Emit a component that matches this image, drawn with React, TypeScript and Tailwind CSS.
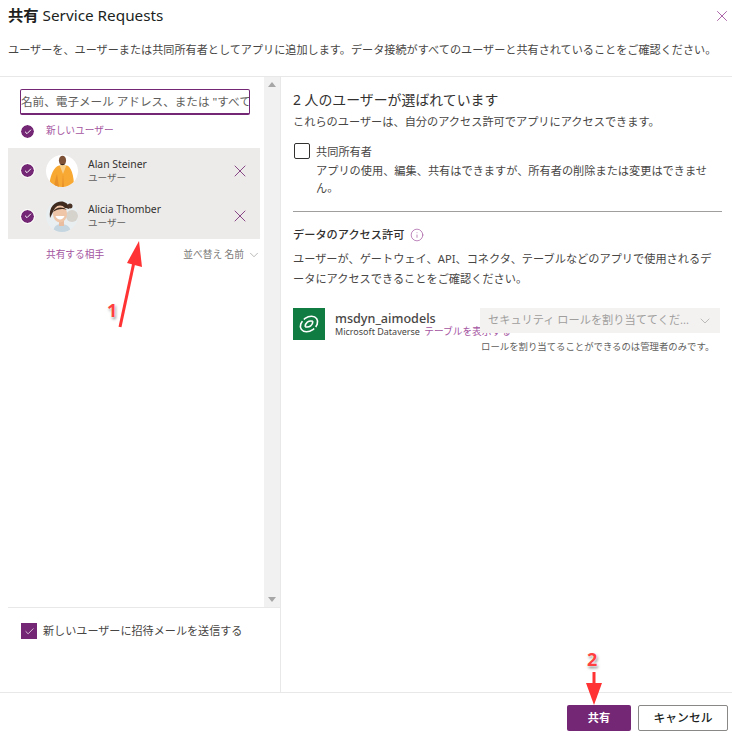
import { X, ChevronDown, Check, Info } from "lucide-react";

const font = { fontFamily: '"Noto Sans", "Noto Sans CJK JP", sans-serif' };

function Tick() {
  return (
    <span className="flex h-[13px] w-[13px] shrink-0 items-center justify-center rounded-full bg-[#742774] outline outline-1 outline-white">
      <Check className="h-[8px] w-[8px] text-white" strokeWidth={3} />
    </span>
  );
}

function AlanAvatar() {
  return (
    <svg viewBox="0 0 32 32" className="h-8 w-8 shrink-0 rounded-full bg-white">
      <path d="M3 32 C4 20 8 12 13 10.5 L21 10.5 C25 12 28 20 28 32 Z" fill="#f7a933" />
      <path d="M8 32 C9 26 10 22 11 19 L13 32 Z" fill="#e8912a" />
      <path d="M13.5 10 L17 19 L20.5 10 Z" fill="#f9d08a" />
      <path d="M16 32 L17 18 L18 32 Z" fill="#e8912a" />
      <ellipse cx="16.5" cy="5.5" rx="3.6" ry="4.8" fill="#7d5236" />
      <path d="M13 7 C14 11 19 11 20 7 L19 9 L14 9 Z" fill="#33231a" />
    </svg>
  );
}

function AliciaAvatar() {
  return (
    <svg viewBox="0 0 32 32" className="h-8 w-8 shrink-0 rounded-full bg-[#e9eef0]">
      <circle cx="26" cy="16" r="6" fill="#d6d2cc" />
      <path d="M7 32 C8 26 11 24 15 24 C20 24 24 26 25 32 Z" fill="#c5d6e0" />
      <path d="M13 20 L18 20 L18 26 L13 26 Z" fill="#e9bd9f" />
      <path d="M4 18 C2 5 12 0 18 2 C21 3 23 5 23 9 L20 8 L8 10 Z" fill="#3f2a20" />
      <circle cx="24" cy="6" r="2.5" fill="#4a3226" />
      <ellipse cx="14" cy="14" rx="7" ry="8.5" fill="#f0c6a8" />
      <path d="M7 12 C9 7 17 6 21 10 C17 8 11 9 7 12 Z" fill="#3f2a20" />
      <path d="M9.5 16 C11 20.5 17 20.5 18.5 16 Z" fill="#fff" />
    </svg>
  );
}

function UserRow({ name, avatar }: { name: string; avatar: React.ReactNode }) {
  return (
    <div className="flex h-[45.5px] items-center pl-[13px] pr-[10px]">
      <Tick />
      <div className="ml-3">{avatar}</div>
      <div className="ml-[10px] flex-1">
        <div className="text-[10.4px] leading-[13px] text-[#323130]">{name}</div>
        <div className="text-[9.6px] leading-[13px] text-[#605e5c]">ユーザー</div>
      </div>
      <X className="h-5 w-5 text-[#742774]" strokeWidth={1} />
    </div>
  );
}

export default function App() {
  return (
    <div style={font} className="relative flex h-[741px] w-[732px] flex-col overflow-hidden bg-white text-[#323130]">
      <header className="relative h-[77px] shrink-0 border-b border-[#e8e8e8] px-2 pt-[4px]">
        <h1 className="text-[15.3px] leading-[22px] text-[#201f1e]">
          <span className="font-bold">共有</span> Service Requests
        </h1>
        <p className="mt-[14px] whitespace-nowrap text-[11.14px] leading-[20px] text-[#484644]">
          ユーザーを、ユーザーまたは共同所有者としてアプリに追加します。データ接続がすべてのユーザーと共有されていることをご確認ください。
        </p>
        <X className="absolute right-[1px] top-[7px] h-[18px] w-[18px] text-[#a4549f]" strokeWidth={1.2} />
      </header>

      <div className="flex min-h-0 flex-1">
        <aside className="flex w-[281px] shrink-0 flex-col border-r border-[#e8e8e8]">
          <div className="flex h-[530px] shrink-0">
            <div className="w-[264px] shrink-0 pt-3">
              <div className="ml-5 flex h-[26px] w-[230px] items-center overflow-hidden rounded-[2px] border border-[#742774] border-b-2 bg-white">
                <span className="whitespace-nowrap text-[11.6px] text-[#605e5c]">名前、電子メール アドレス、または "すべてのユーザー"</span>
              </div>
              <div className="mt-[10px] flex h-[13px] items-center pl-[21px]">
                <Tick />
                <span className="ml-3 text-[9.7px] text-[#a4549f]">新しいユーザー</span>
              </div>
              <div className="ml-2 mr-1 mt-[10px] h-[91px] bg-[#edebe9]">
                <UserRow name="Alan Steiner" avatar={<AlanAvatar />} />
                <UserRow name="Alicia Thomber" avatar={<AliciaAvatar />} />
              </div>
              <div className="mt-[9px] flex items-center pl-[46px] pr-[3px] text-[9.7px] leading-[14px]">
                <span className="text-[#a4549f]">共有する相手</span>
                <span className="ml-auto text-[#7a7876]">並べ替え 名前</span>
                <ChevronDown className="ml-[3px] h-[14px] w-[14px] text-[#8a8886]" strokeWidth={1} />
              </div>
            </div>
            <div className="flex w-4 flex-col items-center justify-between bg-[#f1f1f1] py-[5px]">
              <span className="h-0 w-0 border-x-[4px] border-b-[5px] border-x-transparent border-b-[#a6a6a6]" />
              <span className="h-0 w-0 border-x-[4px] border-t-[5px] border-x-transparent border-t-[#a6a6a6]" />
            </div>
          </div>
          <div className="ml-2 flex flex-1 items-start border-t border-[#e8e8e8] pl-[13px] pt-[15px]">
            <span className="flex h-4 w-4 items-center justify-center bg-[#742774]">
              <Check className="h-[11px] w-[11px] text-white" strokeWidth={1.5} />
            </span>
            <span className="ml-[6px] text-[11.1px] leading-4 text-[#484644]">新しいユーザーに招待メールを送信する</span>
          </div>
        </aside>

        <main className="min-w-0 flex-1 pl-3 pr-[10px] pt-[13px]">
          <h2 className="text-[13.9px] leading-5 text-[#323130]">2 人のユーザーが選ばれています</h2>
          <p className="mt-[2px] text-[11.2px] leading-[20px] text-[#484644]">これらのユーザーは、自分のアクセス許可でアプリにアクセスできます。</p>
          <div className="mt-[11px] flex pl-[1px]">
            <span className="h-4 w-4 shrink-0 rounded-[2px] border border-[#323130] bg-white" />
            <div className="ml-[6px] text-[11.2px] text-[#484644]">
              <div className="leading-[18px]">共同所有者</div>
              <div className="mt-[1px] leading-[17px]">
                アプリの使用、編集、共有はできますが、所有者の削除または変更はできませ
                <br />
                ん。
              </div>
            </div>
          </div>
          <div className="mt-[15px] border-t border-[#a19f9d]" />
          <div className="mt-[15px] flex items-center">
            <span className="text-[11.2px] font-medium leading-[16px] text-[#323130]">データのアクセス許可</span>
            <Info className="ml-[6px] h-[14px] w-[14px] text-[#a4549f]" strokeWidth={1.2} />
          </div>
          <p className="mt-[6px] text-[11.2px] leading-[20px] text-[#484644]">
            ユーザーが、ゲートウェイ、API、コネクタ、テーブルなどのアプリで使用されるデ
            <br />
            ータにアクセスできることをご確認ください。
          </p>

          <div className="mt-[19px] flex">
            <div className="flex h-8 w-8 shrink-0 items-center justify-center bg-[#107c41]">
              <svg viewBox="0 0 20 20" className="h-[22px] w-[22px]" fill="none" stroke="#fff" strokeWidth="1.5">
                <ellipse cx="10" cy="10" rx="8.5" ry="6.2" transform="rotate(-35 10 10)" />
                <path d="M6.5 12.5 C6.5 9 9.5 6.5 13.5 7.5" />
                <path d="M13.5 7.5 C13.5 11 10.5 13.5 6.5 12.5" />
                <path d="M3 5 L6 8 M17 15 L14 12" stroke="#107c41" strokeWidth="2" />
              </svg>
            </div>
            <div className="ml-[10px] w-[145px] shrink-0 whitespace-nowrap pt-[3px]">
              <div className="text-[12.6px] font-medium leading-[15px] text-[#484644]">msdyn_aimodels</div>
              <div className="text-[9px] leading-[11px] text-[#484644]">
                Microsoft Dataverse <span className="ml-[2px] text-[9.7px] text-[#a4549f]">テーブルを表示する</span>
              </div>
            </div>
            <div className="relative w-[240px] shrink-0">
              <div className="flex h-[25px] items-center justify-between bg-[#f3f2f1] pl-2 pr-[7px]">
                <span className="whitespace-nowrap text-[11.2px] text-[#a19f9d]">セキュリティ ロールを割り当ててくだ...</span>
                <ChevronDown className="h-[16px] w-[16px] text-[#a19f9d]" strokeWidth={1} />
              </div>
              <p className="mt-[6px] whitespace-nowrap pl-[1px] text-[9.4px] leading-[16px] text-[#605e5c]">ロールを割り当てることができるのは管理者のみです。</p>
            </div>
          </div>
        </main>
      </div>

      <footer className="flex h-[49px] shrink-0 items-start justify-end gap-[7px] border-t border-[#e8e8e8] pr-1 pt-3">
        <button className="h-[26px] w-16 rounded-[2px] bg-[#742774] text-[11.2px] font-bold text-white">共有</button>
        <button className="h-[26px] w-[90px] rounded-[2px] border border-[#8a8886] bg-white text-[11.8px] font-medium text-[#201f1e]">キャンセル</button>
      </footer>

      {/* annotations drawn on top of the screenshot */}
      <svg viewBox="0 0 732 741" className="pointer-events-none absolute inset-0 h-[741px] w-[732px]">
        <path d="M120 327 L134 262" stroke="#ff3333" strokeWidth="3" fill="none" />
        <path d="M139 241 L127 263 L142 267 Z" fill="#ff3333" />
        <path d="M594 672 L594 690" stroke="#ff3333" strokeWidth="3" fill="none" />
        <path d="M594 705 L586 683 L602 683 Z" fill="#ff3333" />
      </svg>
      <span className="absolute left-[107px] top-[298px] text-[18px] font-bold leading-6 text-[#ff4040] [text-shadow:0_0_2px_#fff,0_0_3px_#fff,1px_2px_3px_#777]">1</span>
      <span className="absolute left-[587px] top-[647px] text-[18px] font-bold leading-6 text-[#ff4040] [text-shadow:0_0_2px_#fff,0_0_3px_#fff,1px_2px_3px_#777]">2</span>
    </div>
  );
}
